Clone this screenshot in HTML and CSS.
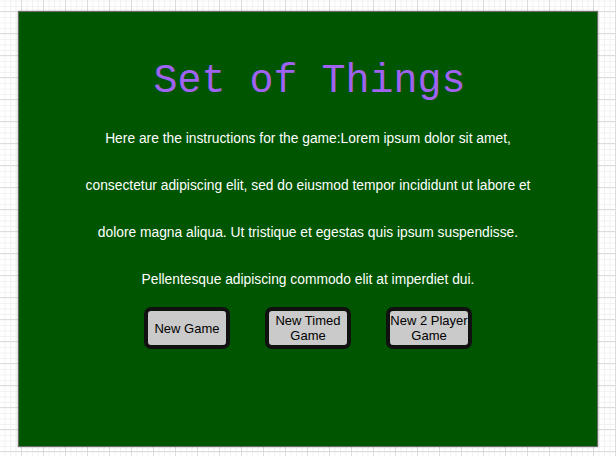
FILE: index.html
```html
<!DOCTYPE html>
<html>
<head>
<meta charset="utf-8">
<title>Set of Things</title>
<link rel="stylesheet" href="styles.css">
</head>
<body>
  <div class="panel">
    <h1 class="title">Set of Things</h1>
    <p class="instructions">Here are the instructions for the game:Lorem ipsum dolor sit amet, consectetur adipiscing elit, sed do eiusmod tempor incididunt ut labore et dolore magna aliqua. Ut tristique et egestas quis ipsum suspendisse. Pellentesque adipiscing commodo elit at imperdiet dui.</p>
    <div class="buttons">
      <button class="btn">New Game</button>
      <button class="btn">New Timed Game</button>
      <button class="btn">New 2 Player Game</button>
    </div>
  </div>
</body>
</html>
```
FILE: styles.css
```css
html, body {
  margin: 0;
  padding: 0;
}
body {
  width: 616px;
  height: 456px;
  overflow: hidden;
  background-color: #ffffff;
  background-image:
    linear-gradient(#dcdcdc 1px, transparent 1px),
    linear-gradient(90deg, #dcdcdc 1px, transparent 1px),
    linear-gradient(#f1f1f1 1px, transparent 1px),
    linear-gradient(90deg, #f1f1f1 1px, transparent 1px);
  background-size: 22px 22px, 22px 22px, 5.5px 5.5px, 5.5px 5.5px;
  background-position: 0 11px, 21px 0, 0 0.5px, 21px 0;
  font-family: "Liberation Sans", Arial, sans-serif;
  padding-top: 11px;
  box-sizing: border-box;
}
.panel {
  margin: 0 18px;
  height: 387px;
  background: #005500;
  border: 1px solid #6a6a6a;
  box-shadow: 0 0 2px rgba(0, 0, 0, 0.35);
  padding-top: 47px;
  box-sizing: content-box;
}
.title {
  margin: 0 0 11px;
  font-family: "Liberation Mono", "Courier New", monospace;
  font-weight: normal;
  font-size: 40px;
  line-height: 45px;
  color: #a062f0;
  text-align: center;
  padding-left: 3px;
}
.instructions {
  width: 80%;
  margin: 0 auto;
  color: #ffffff;
  font-size: 13.8px;
  line-height: 47px;
  text-align: center;
}
.buttons {
  display: flex;
  justify-content: center;
  gap: 35px;
  margin-top: 4px;
}
.btn {
  width: 86px;
  height: 42px;
  box-sizing: border-box;
  padding: 0;
  background: #cacaca;
  border: 4px solid #111111;
  border-radius: 7px;
  font-family: "Liberation Sans", Arial, sans-serif;
  font-size: 13px;
  line-height: 15px;
  color: #000000;
  text-align: center;
}
```
